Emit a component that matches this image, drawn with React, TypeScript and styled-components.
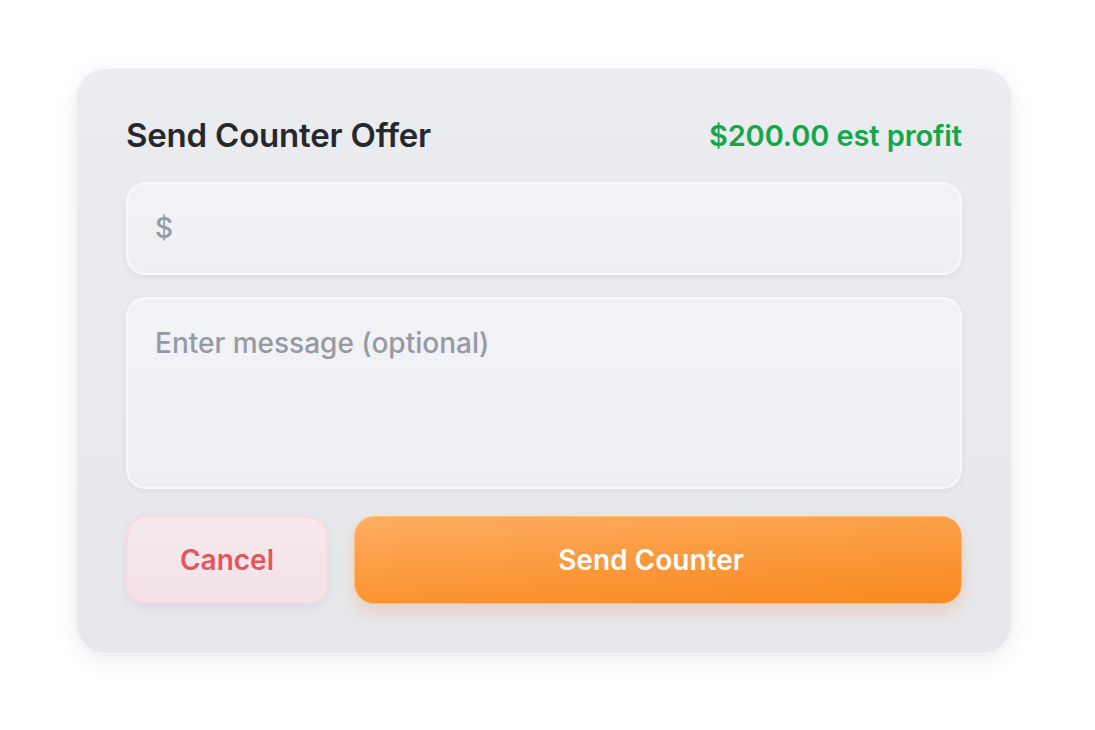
import React from "react";
import styled, { createGlobalStyle } from "styled-components";

const Global = createGlobalStyle`
  html, body { margin: 0; padding: 0; background: #ffffff; }
  body { font-family: Inter, "Noto Sans", "Liberation Sans", sans-serif; -webkit-font-smoothing: antialiased; }
  * { box-sizing: border-box; }
`;

const Page = styled.div`
  width: 1095px;
  height: 730px;
  padding: 68px 0 0 76px;
`;

const Card = styled.div`
  width: 936px;
  height: 586px;
  border-radius: 30px;
  background: linear-gradient(180deg, #ebecf0 0%, #e7e8ec 100%);
  border: 1.5px solid #f6f7f9;
  box-shadow: 0 6px 24px rgba(40, 45, 60, 0.08), 0 1px 3px rgba(40, 45, 60, 0.05);
  padding: 49px;
  display: flex;
  flex-direction: column;
`;

const Header = styled.div`
  height: 34px;
  display: flex;
  align-items: center;
  justify-content: space-between;
  margin-bottom: 30px;
`;

const Title = styled.h2`
  margin: 0;
  font-size: 33px;
  font-weight: 600;
  color: #26282d;
  letter-spacing: -0.2px;
`;

const Profit = styled.span`
  font-size: 29px;
  font-weight: 600;
  color: #14a74a;
  letter-spacing: -0.1px;
`;

const Field = styled.div<{ $tall?: boolean }>`
  height: ${(p) => (p.$tall ? "193px" : "93px")};
  border-radius: 20px;
  background: linear-gradient(180deg, #f2f3f6 0%, #eeeff3 100%);
  border: 2px solid #f8f9fb;
  box-shadow: 0 2px 6px rgba(40, 45, 60, 0.06);
  display: flex;
  align-items: ${(p) => (p.$tall ? "flex-start" : "center")};
  padding: ${(p) => (p.$tall ? "29px 27px" : "0 27px")};
  margin-bottom: ${(p) => (p.$tall ? "27px" : "22px")};
`;

const Placeholder = styled.span<{ $size: number }>`
  font-size: ${(p) => p.$size}px;
  font-weight: 500;
  color: #979aa3;
  line-height: 1.1;
`;

const Actions = styled.div`
  display: flex;
  gap: 26px;
  height: 88px;
`;

const Button = styled.button<{ $primary?: boolean }>`
  height: 88px;
  border-radius: 20px;
  font-family: inherit;
  font-size: 28px;
  font-weight: 600;
  cursor: pointer;
  display: flex;
  align-items: center;
  justify-content: center;
  ${(p) =>
    p.$primary
      ? `
    flex: 1;
    padding: 0 14px 0 0;
    color: #ffffff;
    background: linear-gradient(176deg, #ffae62 0%, #fb9b40 45%, #f7891e 100%);
    border: 1.5px solid #ffc070;
    box-shadow: 0 8px 18px rgba(230, 120, 30, 0.22);
  `
      : `
    width: 202px;
    padding: 0;
    color: #e5555d;
    background: linear-gradient(180deg, #f6e8ec 0%, #f3e3e8 100%);
    border: 2px solid #fbd9df;
    box-shadow: 0 4px 12px rgba(40, 45, 60, 0.08);
  `}
`;

export default function App() {
  return (
    <>
      <Global />
      <Page>
        <Card>
          <Header>
            <Title>Send Counter Offer</Title>
            <Profit>$200.00 est profit</Profit>
          </Header>
          <Field>
            <Placeholder $size={28}>$</Placeholder>
          </Field>
          <Field $tall>
            <Placeholder $size={28}>Enter message (optional)</Placeholder>
          </Field>
          <Actions>
            <Button>Cancel</Button>
            <Button $primary>Send Counter</Button>
          </Actions>
        </Card>
      </Page>
    </>
  );
}
